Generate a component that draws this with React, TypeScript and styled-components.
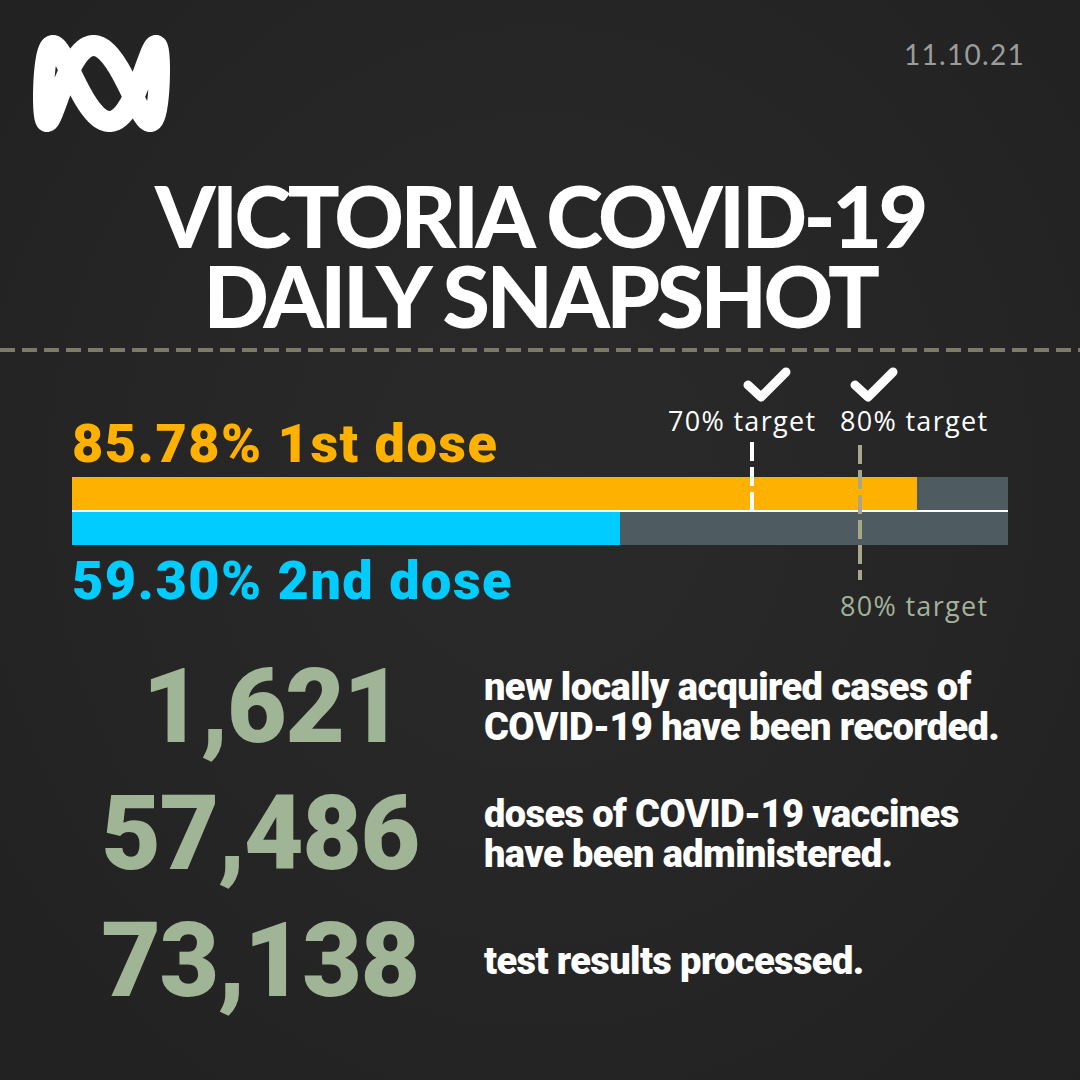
import styled, { createGlobalStyle } from 'styled-components';

const GlobalStyle = createGlobalStyle`
  html, body {
    margin: 0;
    padding: 0;
    background: #262626;
  }
  body {
    font-family: Roboto, 'Liberation Sans', sans-serif;
  }
`;

/** ABCのリサジュー曲線ロゴ (x = cos(t + φ), y = sin 3t を少し横に押し広げる) */
const LOGO_STROKE = 21;
const logoPath = (() => {
  const ax = 68.5 - LOGO_STROKE / 2;
  const ay = 48.5 - LOGO_STROKE / 2;
  const pts: string[] = [];
  for (let i = 0; i <= 480; i++) {
    const t = (i / 480) * Math.PI * 2;
    const c = Math.cos(t - 0.12);
    const u = 0.75 * c + 0.25 * Math.sin((Math.PI / 2) * c);
    pts.push(`${(68.5 + ax * u).toFixed(2)},${(48.5 - ay * Math.sin(3 * t)).toFixed(2)}`);
  }
  return `M${pts.join('L')}Z`;
})();

const AbcLogo = () => (
  <svg width="137" height="97" viewBox="0 0 137 97">
    <path d={logoPath} fill="none" stroke="#fff" strokeWidth={LOGO_STROKE} strokeLinejoin="round" />
  </svg>
);

const Tick = () => (
  <svg width="50" height="36" viewBox="0 0 50 36">
    <polyline
      points="6,19 19,31 44,6"
      fill="none"
      stroke="#fff"
      strokeWidth="9"
      strokeLinecap="round"
      strokeLinejoin="round"
    />
  </svg>
);

type Stat = { value: string; shift: number; lines: string[] };

const stats: Stat[] = [
  { value: '1,621', shift: 12, lines: ['new locally acquired cases of', 'COVID-19 have been recorded.'] },
  { value: '57,486', shift: 0, lines: ['doses of COVID-19 vaccines', 'have been administered.'] },
  { value: '73,138', shift: 0, lines: ['test results processed.'] }
];

const ORANGE = '#ffb100';
const BLUE = '#00ccff';

export default function App() {
  return (
    <Page>
      <GlobalStyle />
      <Header>
        <AbcLogo />
        <DateText>11.10.21</DateText>
      </Header>

      <Title>
        VICTORIA COVID-19
        <br />
        DAILY SNAPSHOT
      </Title>

      <Divider />

      <Chart>
        <ChartHead>
          <DoseLabel $color={ORANGE}>85.78% 1st dose</DoseLabel>
        </ChartHead>

        <TickMark $left={670} $top={14}>
          <Tick />
        </TickMark>
        <TickMark $left={777} $top={14}>
          <Tick />
        </TickMark>
        <TargetText $left={596} $top={54} $color="#ffffff">70% target</TargetText>
        <TargetText $left={768} $top={54} $color="#ffffff">80% target</TargetText>

        <Marker $left={678} $top={90} $height={68} $color="#ffffff" />
        <Marker $left={786} $top={93} $height={135} $color="#a9a78a" />

        <BarStack>
          <Track>
            <Fill $color={ORANGE} style={{ width: `${(845 / 936) * 100}%` }} />
          </Track>
          <Track>
            <Fill $color={BLUE} style={{ width: `${(548 / 936) * 100}%` }} />
          </Track>
        </BarStack>

        <DoseLabel $color={BLUE} $gap={6}>59.30% 2nd dose</DoseLabel>
        <TargetText $left={768} $top={239} $color="#a3b29a">80% target</TargetText>
      </Chart>

      <Stats>
        {stats.map((s) => (
          <StatRow key={s.value}>
            <StatNumber $shift={s.shift}>{s.value}</StatNumber>
            <StatText>
              {s.lines.map((l) => (
                <div key={l}>{l}</div>
              ))}
            </StatText>
          </StatRow>
        ))}
      </Stats>
    </Page>
  );
}

const Page = styled.div`
  width: 1080px;
  height: 1080px;
  overflow: hidden;
  background: radial-gradient(ellipse at 50% 45%, #2a2a2a 0%, #252525 60%, #212121 100%);
  box-sizing: border-box;
`;

const Header = styled.div`
  display: flex;
  justify-content: space-between;
  align-items: flex-start;
  height: 97px;
  padding: 35px 55px 0 33px;
`;

const DateText = styled.div`
  margin-top: 5px;
  font-family: Lato, 'Liberation Sans', sans-serif;
  font-size: 28px;
  line-height: 28px;
  letter-spacing: 1.3px;
  color: #9c9c9c;
`;

const Title = styled.h1`
  margin: 43px 0 0;
  text-align: center;
  font-family: Lato, 'Liberation Sans', sans-serif;
  font-weight: 900;
  font-size: 86px;
  line-height: 80px;
  letter-spacing: -3.5px;
  color: #fff;
`;

const Divider = styled.div`
  margin-top: 13px;
  height: 4px;
  background: repeating-linear-gradient(90deg, #7c7b69 0 15px, transparent 15px 22px);
`;

const Chart = styled.div`
  position: relative;
  width: 936px;
  margin-left: 72px;
`;

const ChartHead = styled.div`
  height: 125px;
  box-sizing: border-box;
  padding-bottom: 3px;
  display: flex;
  align-items: flex-end;
`;

const DoseLabel = styled.div<{ $color: string; $gap?: number }>`
  margin-top: ${(p) => p.$gap ?? 0}px;
  font-family: Roboto, 'Liberation Sans', sans-serif;
  font-weight: 900;
  font-size: 54px;
  line-height: 60px;
  letter-spacing: 1.5px;
  color: ${(p) => p.$color};
`;

const TickMark = styled.div<{ $left: number; $top: number }>`
  position: absolute;
  left: ${(p) => p.$left}px;
  top: ${(p) => p.$top}px;
  line-height: 0;
`;

const TargetText = styled.div<{ $left: number; $top: number; $color: string }>`
  position: absolute;
  left: ${(p) => p.$left}px;
  top: ${(p) => p.$top}px;
  font-family: 'Open Sans', 'Liberation Sans', sans-serif;
  font-size: 27px;
  line-height: 30px;
  letter-spacing: 1.3px;
  white-space: nowrap;
  color: ${(p) => p.$color};
`;

const Marker = styled.div<{ $left: number; $top: number; $height: number; $color: string }>`
  position: absolute;
  z-index: 2;
  left: ${(p) => p.$left}px;
  top: ${(p) => p.$top}px;
  width: 4px;
  height: ${(p) => p.$height}px;
  background: repeating-linear-gradient(
    180deg,
    ${(p) => p.$color} 0 19px,
    transparent 19px 25px
  );
`;

const BarStack = styled.div`
  display: flex;
  flex-direction: column;
  gap: 2px;
  background: #ffffff;
`;

const Track = styled.div`
  height: 33px;
  background: #4e5c62;
  display: flex;
`;

const Fill = styled.div<{ $color: string }>`
  height: 100%;
  background: ${(p) => p.$color};
`;

const Stats = styled.div`
  margin-top: 32px;
  display: flex;
  flex-direction: column;
`;

const StatRow = styled.div`
  display: flex;
  align-items: center;
  height: 127px;
`;

const StatNumber = styled.div<{ $shift: number }>`
  width: 400px;
  margin-left: 60px;
  padding-left: ${(p) => p.$shift * 2}px;
  box-sizing: border-box;
  text-align: center;
  font-family: Roboto, 'Liberation Sans', sans-serif;
  font-weight: 900;
  font-size: 103px;
  line-height: 1;
  letter-spacing: -1.5px;
  color: #a0b596;
`;

const StatText = styled.div`
  margin-left: 24px;
  font-family: Roboto, 'Liberation Sans', sans-serif;
  font-weight: 900;
  font-size: 38px;
  line-height: 40px;
  letter-spacing: -0.6px;
  color: #ffffff;
`;
